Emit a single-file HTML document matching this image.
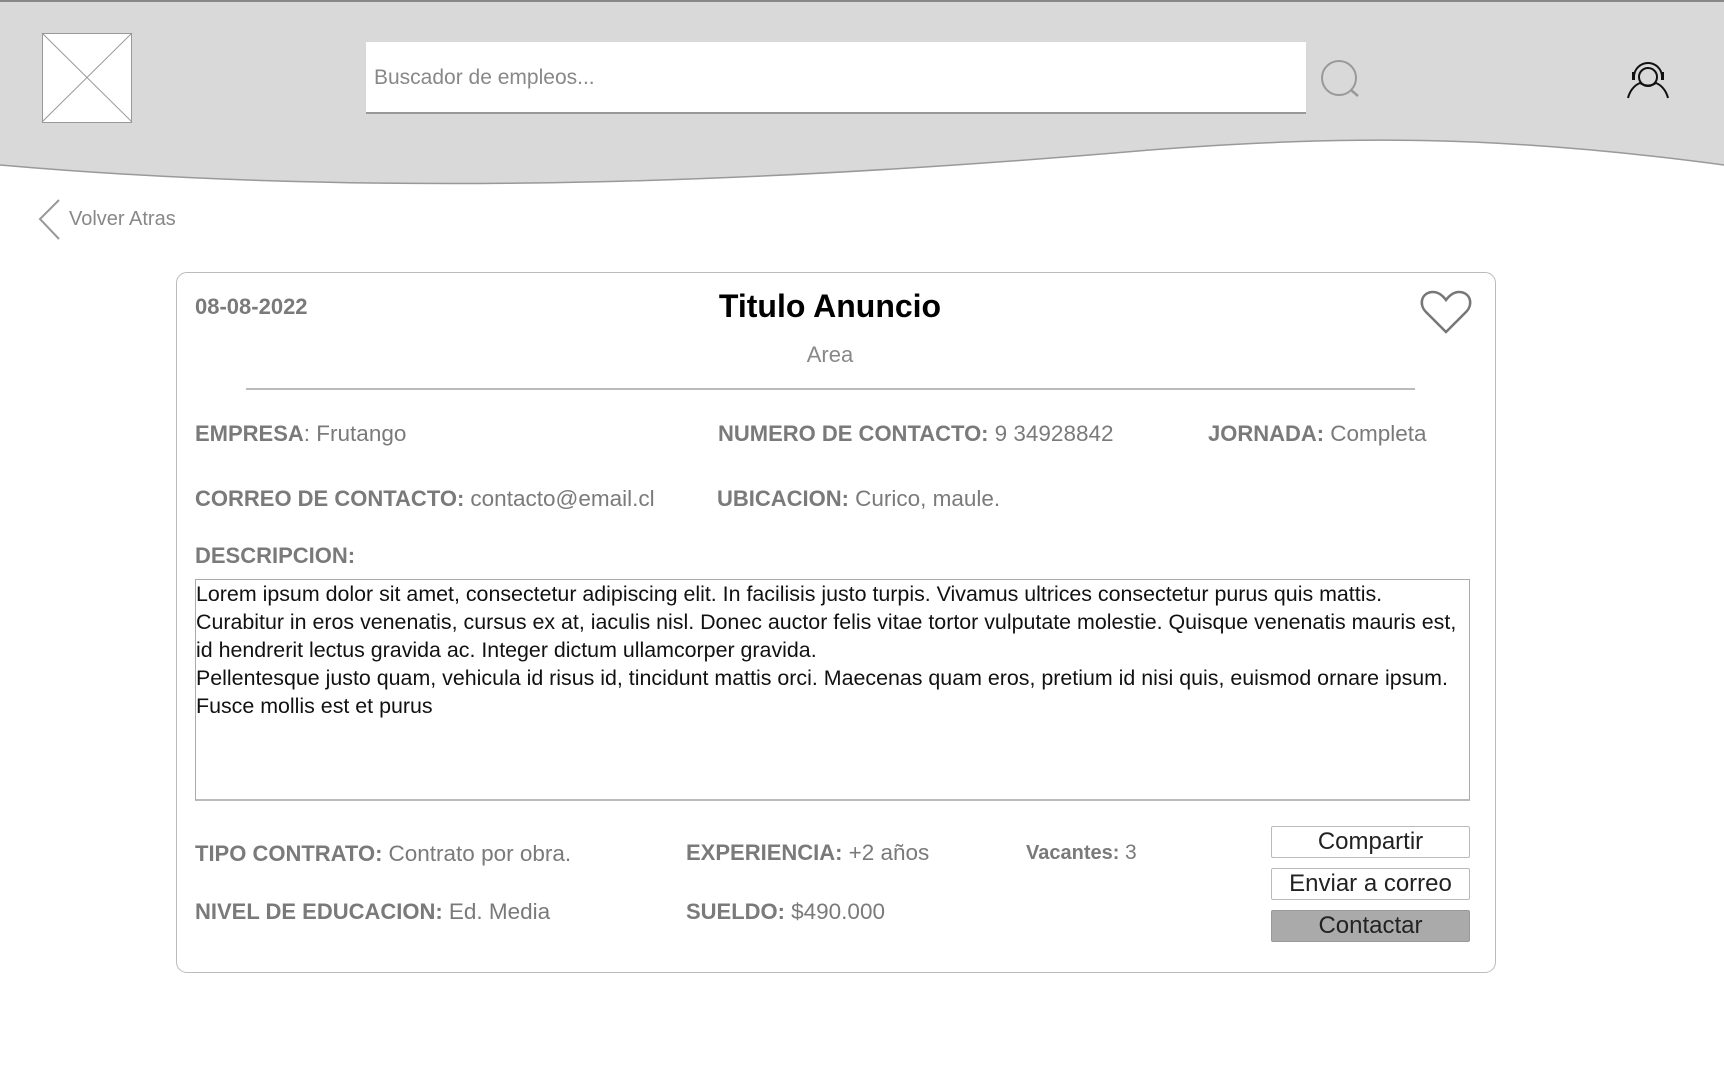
<!DOCTYPE html>
<html><head><meta charset="utf-8"><style>
*{margin:0;padding:0;box-sizing:border-box}
body{width:1724px;height:1080px;background:#fff;font-family:"Liberation Sans",sans-serif;position:relative;overflow:hidden}
.a{position:absolute;white-space:nowrap}
.l{color:#7a7a7a;font-weight:bold;font-size:22px}
.v{color:#7a7a7a;font-weight:normal;font-size:22.5px}
.btn{position:absolute;left:1271px;width:199px;height:32px;border:1px solid #bbb;border-radius:2px;background:#fff;font-size:24px;text-align:center;line-height:30px;color:#222}
</style></head><body>
<svg class="a" style="left:0;top:0" width="1724" height="200">
<path d="M0 0H1724V165C1500 135 1350 135 1150 150C800 180 400 200 0 165Z" fill="#d9d9d9"/>
<path d="M0 165C400 200 800 180 1150 150C1350 135 1500 135 1724 165" fill="none" stroke="#999" stroke-width="1.5"/>
<line x1="0" y1="1" x2="1724" y2="1" stroke="#888" stroke-width="2"/>
<rect x="42.5" y="33.5" width="89" height="89" fill="#fff" stroke="#999"/>
<line x1="42" y1="33" x2="132" y2="122" stroke="#999"/><line x1="132" y1="33" x2="42" y2="122" stroke="#999"/>
<rect x="366" y="42" width="940" height="71" fill="#fff"/>
<line x1="366" y1="113" x2="1306" y2="113" stroke="#999" stroke-width="2"/>
<circle cx="1339" cy="78" r="17" fill="none" stroke="#999" stroke-width="2"/>
<line x1="1351" y1="90" x2="1358" y2="96" stroke="#999" stroke-width="2.5"/>
<circle cx="1648" cy="77" r="9" fill="none" stroke="#111" stroke-width="2"/>
<path d="M1634 77A14 14 0 0 1 1662 77" fill="none" stroke="#111" stroke-width="2"/>
<rect x="1632" y="72" width="3" height="8" fill="#111"/><rect x="1661" y="72" width="3" height="8" fill="#111"/>
<path d="M1628 98C1630 90 1635 85 1640 83Q1648 88 1656 83C1661 85 1666 90 1668 98" fill="none" stroke="#111" stroke-width="2"/>
</svg>
<div class="a" style="left:374px;top:66px;font-size:21px;color:#888">Buscador de empleos...</div>
<svg class="a" style="left:36px;top:198px" width="28" height="44"><path d="M23 2L4 21L23 41" fill="none" stroke="#999" stroke-width="2"/></svg>
<div class="a" style="left:69px;top:208px;font-size:20px;color:#888">Volver Atras</div>
<div class="a" style="left:176px;top:272px;width:1320px;height:701px;border:1.5px solid #bbb;border-radius:11px"></div>
<div class="a l" style="left:195px;top:294px">08-08-2022</div>
<div class="a" style="left:630px;width:400px;text-align:center;top:288px;font-size:32px;font-weight:bold;color:#000">Titulo Anuncio</div>
<div class="a" style="left:630px;width:400px;text-align:center;top:342px;font-size:22px;color:#888">Area</div>
<svg class="a" style="left:1418px;top:288px" width="56" height="48"><path d="M28 44L8 24C0 16 4 4 15 4C21 4 25 8 28 12C31 8 35 4 41 4C52 4 56 16 48 24Z" fill="none" stroke="#777" stroke-width="2.5"/></svg>
<div class="a" style="left:246px;top:388px;width:1169px;height:2px;background:#bbb"></div>
<div class="a l" style="left:195px;top:421px">EMPRESA<span class="v">: Frutango</span></div>
<div class="a l" style="left:718px;top:421px">NUMERO DE CONTACTO: <span class="v">9 34928842</span></div>
<div class="a l" style="left:1208px;top:421px">JORNADA: <span class="v">Completa</span></div>
<div class="a l" style="left:195px;top:486px">CORREO DE CONTACTO: <span class="v">contacto@email.cl</span></div>
<div class="a l" style="left:717px;top:486px">UBICACION: <span class="v">Curico, maule.</span></div>
<div class="a l" style="left:195px;top:543px">DESCRIPCION:</div>
<div class="a" style="left:195px;top:579px;width:1275px;height:222px;border:1px solid #aaa;border-bottom:2px solid #bbb;font-size:21.4px;line-height:28px;color:#111;overflow:hidden">Lorem ipsum dolor sit amet, consectetur adipiscing elit. In facilisis justo turpis. Vivamus ultrices consectetur purus quis mattis.<br>Curabitur in eros venenatis, cursus ex at, iaculis nisl. Donec auctor felis vitae tortor vulputate molestie. Quisque venenatis mauris est,<br>id hendrerit lectus gravida ac. Integer dictum ullamcorper gravida.<br>Pellentesque justo quam, vehicula id risus id, tincidunt mattis orci. Maecenas quam eros, pretium id nisi quis, euismod ornare ipsum.<br>Fusce mollis est et purus</div>
<div class="a l" style="left:195px;top:841px">TIPO CONTRATO: <span class="v">Contrato por obra.</span></div>
<div class="a l" style="left:686px;top:840px">EXPERIENCIA: <span class="v">+2 años</span></div>
<div class="a l" style="left:1026px;top:841px;font-size:20px">Vacantes: <span class="v" style="font-size:21px">3</span></div>
<div class="a l" style="left:195px;top:899px">NIVEL DE EDUCACION: <span class="v">Ed. Media</span></div>
<div class="a l" style="left:686px;top:899px">SUELDO: <span class="v">$490.000</span></div>
<div class="btn" style="top:826px">Compartir</div>
<div class="btn" style="top:868px">Enviar a correo</div>
<div class="btn" style="top:910px;background:#aaa;border-color:#999">Contactar</div>
</body></html>
